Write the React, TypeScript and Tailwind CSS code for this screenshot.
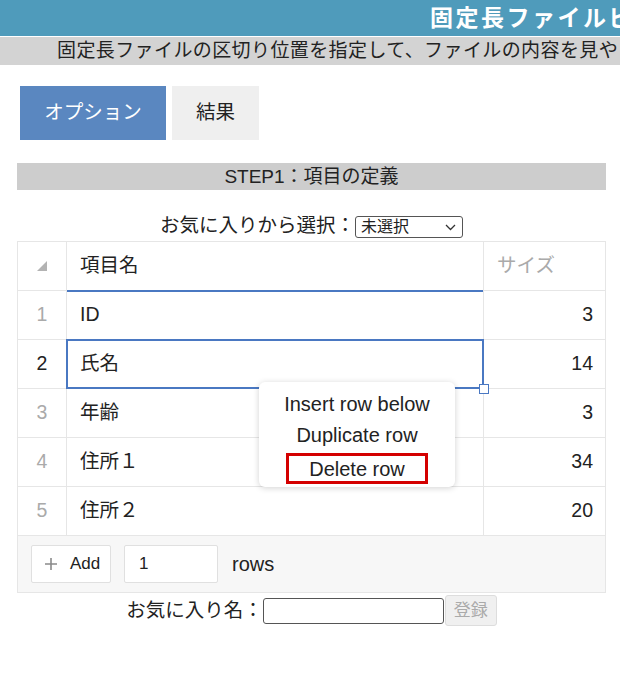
import React from "react";

const rows = [
  { n: 1, name: "ID", size: 3 },
  { n: 2, name: "氏名", size: 14 },
  { n: 3, name: "年齢", size: 3 },
  { n: 4, name: "住所１", size: 34 },
  { n: 5, name: "住所２", size: 20 },
];

const font = { fontFamily: '"Liberation Sans", "Noto Sans CJK JP", sans-serif' };

export default function App() {
  return (
    <div className="min-h-[697px] bg-white text-[19.5px] text-[#222]" style={font}>
      {/* title bar */}
      <div className="h-[36px] bg-[#4f9bbb] overflow-hidden whitespace-nowrap pl-[430px] text-[23px] font-bold leading-[36px] text-white tracking-[2.5px]">
        固定長ファイルビ
      </div>
      <div className="mt-px h-[28px] bg-[#d3d3d3] overflow-hidden whitespace-nowrap pl-[57px] text-[19px] leading-[28px] tracking-[0.4px] text-[#222]">
        固定長ファイルの区切り位置を指定して、ファイルの内容を見や
      </div>

      {/* tabs */}
      <div className="mt-[21px] flex gap-[6px] pl-[20px]">
        <div className="flex h-[54px] w-[146px] items-center justify-center bg-[#5a87c0] text-white">オプション</div>
        <div className="flex h-[54px] w-[87px] items-center justify-center bg-[#efefef] text-[#222]">結果</div>
      </div>

      <div className="ml-[17px] mr-[14px] mt-[23px]">
        <div className="h-[27px] bg-[#cdcdcd] text-center text-[19px] leading-[27px]">STEP1：項目の定義</div>

        <div className="mt-[26px] flex items-center justify-center leading-[22px]">
          <span className="mt-[-4px]">お気に入りから選択：</span>
          <div className="flex h-[22px] w-[108px] items-center justify-between rounded-[3px] border border-[#555] bg-white pl-[5px] pr-[6px] text-[16px] leading-none">
            <span>未選択</span>
            <svg width="11" height="7" viewBox="0 0 11 7" fill="none" stroke="#333" strokeWidth="1.3">
              <path d="M1 1l4.5 4.5L10 1" />
            </svg>
          </div>
        </div>

        {/* grid table */}
        <div className="relative mt-[3px] border border-[#e6e6e6]">
          <div className="flex h-[49px] border-b border-[#e6e6e6]">
            <div className="flex w-[49px] items-center justify-center border-r border-[#e6e6e6]">
              <svg width="10" height="10" viewBox="0 0 10 10">
                <path d="M10 0V10H0Z" fill="#b3b3b3" />
              </svg>
            </div>
            <div className="relative flex w-[416px] items-center pl-[13px]">
              項目名
              <div className="absolute bottom-[-2px] left-0 right-0 h-[2px] bg-[#4a78c2]" />
            </div>
            <div className="flex flex-1 items-center border-l border-[#e6e6e6] pl-[13px] text-[#aaa]">サイズ</div>
          </div>
          {rows.map((r) => (
            <div key={r.n} className="flex h-[49px] border-b border-[#e6e6e6]">
              <div className={`flex w-[49px] items-center justify-center border-r border-[#e6e6e6] ${r.n === 2 ? "text-[#222]" : "text-[#aaa]"}`}>
                {r.n}
              </div>
              <div className="relative flex w-[416px] items-center pl-[13px]">
                {r.name}
                {r.n === 2 && (
                  <>
                    <div className="absolute inset-[-1px] border-2 border-[#4a78c2]" />
                    <div className="absolute bottom-[-6px] right-[-6px] h-[10px] w-[10px] border border-[#4a78c2] bg-white" />
                  </>
                )}
              </div>
              <div className="flex flex-1 items-center justify-end border-l border-[#e6e6e6] pr-[12px]">{r.size}</div>
            </div>
          ))}
          <div className="flex h-[56px] items-center bg-[#f7f7f7] pl-[13px]">
            <div className="flex h-[38px] w-[80px] items-center gap-[13px] rounded-[2px] border border-[#e0e0e0] bg-white pl-[13px] text-[17px]">
              <svg className="shrink-0" width="12" height="12" viewBox="0 0 12 12" stroke="#8a8a8a" strokeWidth="1.6">
                <path d="M6 0V12M0 6H12" />
              </svg>
              <span>Add</span>
            </div>
            <div className="ml-[13px] flex h-[38px] w-[94px] items-center rounded-[2px] border border-[#e0e0e0] bg-white pl-[14px] text-[17px]">1</div>
            <span className="ml-[14px] text-[20px]">rows</span>
          </div>

          {/* context menu */}
          <div className="absolute left-[241px] top-[140px] flex w-[196px] flex-col items-center rounded-[6px] bg-white pt-[9px] pb-[3px] text-[20px] shadow-[0_1px_6px_rgba(0,0,0,0.18)]">
            <div className="h-[31px] leading-[26px]">Insert row below</div>
            <div className="h-[31px] leading-[26px]">Duplicate row</div>
            <div className="flex h-[31px] w-[142px] items-center justify-center border-[3px] border-[#d40000]">Delete row</div>
          </div>
        </div>

        <div className="mt-[2px] flex items-center justify-center">
          <span>お気に入り名：</span>
          <div className="h-[26px] w-[181px] rounded-[3px] border border-[#555] bg-white" />
          <div className="ml-px flex h-[31px] w-[52px] items-center justify-center rounded-[3px] border border-[#ddd] bg-[#f0f0f0] text-[17px] text-[#aaa]">登録</div>
        </div>
      </div>
    </div>
  );
}
